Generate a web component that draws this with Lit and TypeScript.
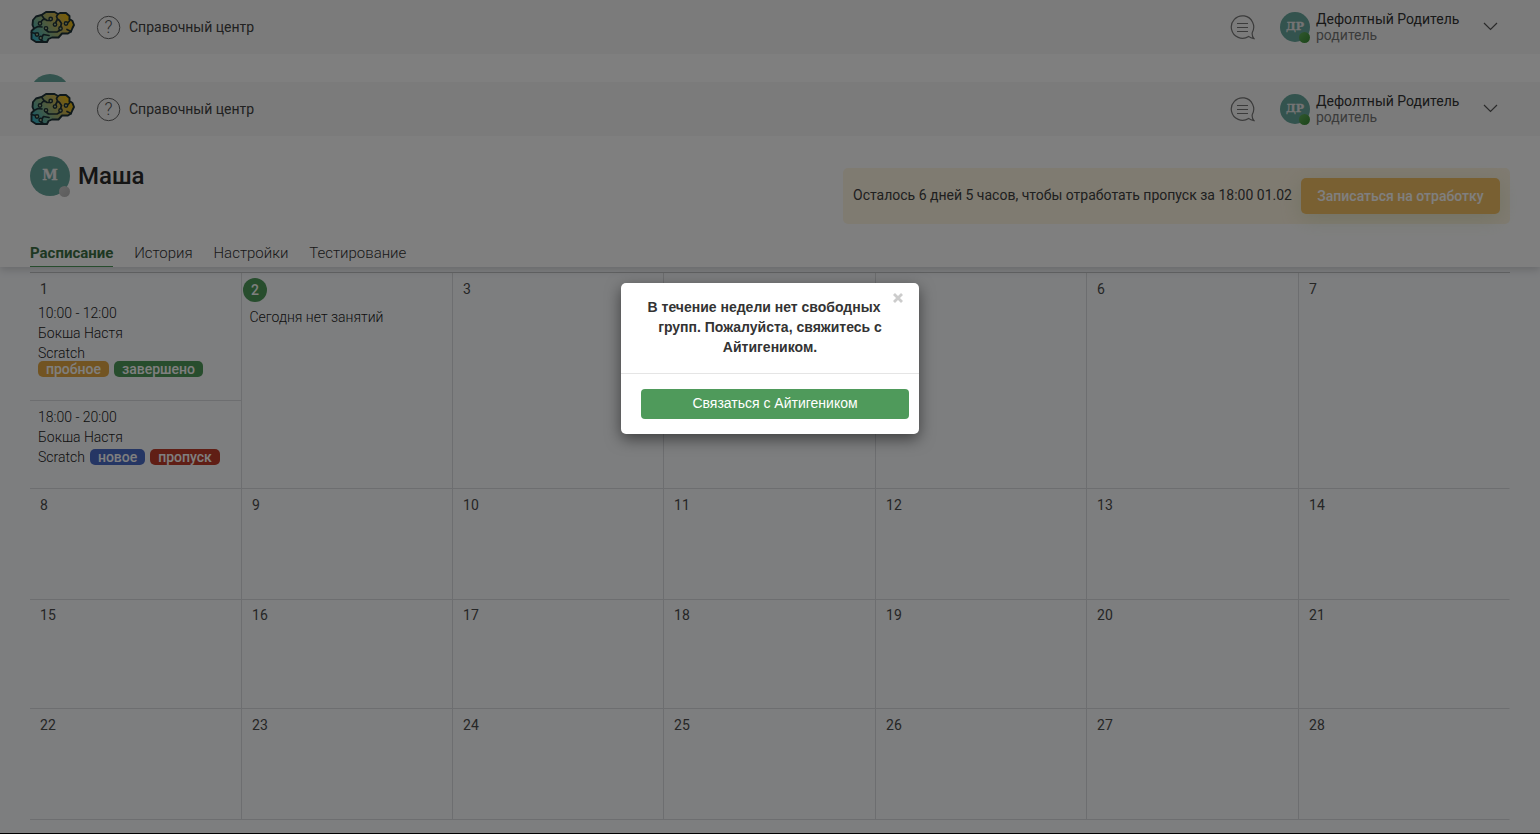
import { LitElement, html, css, svg } from "lit";
import { customElement, property } from "lit/decorators.js";

interface Lesson {
  time: string;
  teacher: string;
  course: string;
  stacked: boolean;
  tags: { text: string; kind: string }[];
}

const lessons: Lesson[] = [
  {
    time: "10:00 - 12:00", teacher: "Бокша Настя", course: "Scratch", stacked: true,
    tags: [{ text: "пробное", kind: "trial" }, { text: "завершено", kind: "done" }],
  },
  {
    time: "18:00 - 20:00", teacher: "Бокша Настя", course: "Scratch", stacked: false,
    tags: [{ text: "новое", kind: "fresh" }, { text: "пропуск", kind: "missed" }],
  },
];

const nodes = [[10, 13.5], [20.7, 9], [25, 14.6], [16, 18.3], [30.5, 18.5], [36, 13.5], [7, 24.5], [10.7, 28]];

@customElement("top-bar")
class TopBar extends LitElement {
  static styles = css`
    :host { display: flex; align-items: center; height: 54px; padding: 0 42px 0 30px; box-sizing: border-box; background: #f7f7f7; font-family: Roboto, sans-serif; flex: none; }
    .logo { width: 46px; height: 34px; display: block; }
    .help { display: flex; align-items: center; gap: 8px; margin-left: 20px; font-size: 14px; line-height: 20px; color: #424242; }
    .help svg, .chat, .chev { display: block; }
    .q { font: 300 18px Roboto, sans-serif; fill: #555; }
    .right { margin-left: auto; display: flex; align-items: center; }
    .avatar { position: relative; width: 30px; height: 30px; margin-left: 25px; border-radius: 50%; background: #66a69c; color: #e8e8e8; text-align: center; font: bold 11px/30px "DejaVu Serif", serif; -webkit-text-stroke: 0.3px #e8e8e8; }
    .dot { position: absolute; right: 0; bottom: -1px; width: 11px; height: 11px; border-radius: 50%; background: linear-gradient(135deg, #62b05c, #368a32); }
    .who { width: 167px; margin-left: 6px; font-size: 14px; line-height: 16px; color: #333; white-space: nowrap; }
    .role { color: #777; }
    .chev { margin-top: -1px; }
  `;
  render() {
    return html`
      <svg class="logo" viewBox="0 0 46 34">
        <defs>
          <linearGradient id="g" x1="0" y1="0.8" x2="1" y2="0.3">
            <stop offset="0" stop-color="#36b3c8" />
            <stop offset="0.45" stop-color="#9bb57c" />
            <stop offset="0.72" stop-color="#cfb44d" />
            <stop offset="1" stop-color="#f5bd00" />
          </linearGradient>
        </defs>
        <path fill="url(#g)" stroke="#1e3238" stroke-width="1.900" stroke-linejoin="round"
          d="M11.500 5 L16 2 H24.500 L28 4 L30 3 H36 L39.500 6 V9 L42.500 11 L44 15 L42.500 18 L41 21.500 L38 23.500 H32 L28.500 27.500 H22 L18.500 29 L17 32 H6 L1.500 29 V21 L4 18.500 L2.500 15 L3 10 L6 6.500 Z" />
        <g fill="none" stroke="#1e3238" stroke-width="1.700" stroke-linecap="round" stroke-linejoin="round">
          <path d="M10.800 12 L13 9.500 H16 M11.500 5 L14 8.500 L17 10.500 H19.500 M28 4 L26.500 6.500 L27.500 9 L25.500 13 M30.500 17 L31.500 13.500 L29.500 10.500 L27.500 9 M37.500 13 L39.500 11 V9 M4 18.500 L8 16.500 L12 17 M16 20 L18.500 22 H27 L30.500 20 M41 21.500 L37 19.500 M1.500 22.500 L5.500 23.500 M12 27 L13.500 24.500 L19 25.500 M10.700 29.500 L13 31.500" />
          ${nodes.map(([x, y]) => svg`<circle cx=${x} cy=${y} r="1.7" stroke-width="1.4" fill="#a8b98a"></circle>`)}
        </g>
      </svg>
      <div class="help">
        <svg width="25" height="25" viewBox="0 0 25 25">
          <circle cx="12.600" cy="12.500" r="11.200" fill="none" stroke="#666" />
          <text class="q" x="12.500" y="18" text-anchor="middle" textLength="8" lengthAdjust="spacingAndGlyphs">?</text>
        </svg>
        <span>Справочный центр</span>
      </div>
      <div class="right">
        <svg class="chat" width="25" height="26" viewBox="0 0 25 26" fill="none" stroke="#777" stroke-width="1.200">
          <path d="M22.200 18.600 A11.200 11.200 0 1 0 18.600 22.400 Q20.500 24.200 24 24.600 Q21.800 22.600 22.200 18.600" />
          <path d="M7 9.500 H18 M7 13.500 H18 M7 17.500 H18" />
        </svg>
        <div class="avatar">ДР<span class="dot"></span></div>
        <div class="who"><div>Дефолтный Родитель</div><div class="role">родитель</div></div>
        <svg class="chev" width="15" height="9" viewBox="0 0 15 9" fill="none" stroke="#555" stroke-width="1.200"><path d="M1 1 L7.500 7.500 L14 1" /></svg>
      </div>`;
  }
}

@customElement("day-cell")
class DayCell extends LitElement {
  @property({ type: Number }) day = 1;
  static styles = css`
    :host { display: block; box-sizing: border-box; border-bottom: 1px solid #dbdde0; border-right: 1px solid #dbdde0; min-width: 0; font: 300 14px/20px Roboto, sans-serif; color: #222; }
    :host(.last) { border-right-color: transparent; }
    .num { height: 20px; padding: 6px 0 0 10px; font-weight: 400; color: #4c4c4c; letter-spacing: 0.2px; }
    .num.tight { padding-top: 5px; }
    .today { width: 24px; height: 24px; margin: 5px 0 0 1px; border-radius: 50%; background: #4f9a5b; color: #fff; text-align: center; line-height: 24px; font-weight: 500; }
    .none { padding: 5px 0 0 7.500px; }
    .lesson { padding: 6px 0 0 8px; height: 81px; box-sizing: border-box; }
    .lesson.first { padding-top: 4px; height: 102px; border-bottom: 1px solid #dbdde0; }
    .row { display: flex; align-items: center; gap: 5px; }
    .row.stacked { display: block; }
    .tags { display: flex; gap: 5px; }
    .stacked .tags { margin-top: -2px; }
    .tag { height: 16px; line-height: 16px; padding: 0 8px; border-radius: 5px; color: #fff; font-size: 14px; font-weight: 500; }
    .trial { background: #e5a944; } .done { background: #4f9a5b; } .fresh { background: #4b6cc8; } .missed { background: #c03c2b; }
  `;
  render() {
    if (this.day === 2) return html`<div class="today">2</div><div class="none">Сегодня нет занятий</div>`;
    return html`<div class="num ${this.day > 14 && this.day < 22 ? "tight" : ""}">${this.day}</div>
      ${this.day === 1 ? lessons.map((l) => html`
        <div class="lesson ${l.stacked ? "first" : ""}">
          <div>${l.time}</div><div>${l.teacher}</div>
          <div class="row ${l.stacked ? "stacked" : ""}"><div>${l.course}</div>
            <div class="tags">${l.tags.map((t) => html`<span class="tag ${t.kind}">${t.text}</span>`)}</div>
          </div>
        </div>`) : ""}`;
  }
}

@customElement("app-root")
class AppRoot extends LitElement {
  static styles = css`
    :host { display: block; position: relative; width: 1540px; height: 834px; overflow: hidden; background: #000; font-family: Roboto, sans-serif; }
    .page { height: 833px; display: flex; flex-direction: column; background: #fafcff; overflow: hidden; }
    .peek { flex: none; height: 28px; background: #fff; overflow: hidden; padding-left: 30px; }
    .circle { width: 40px; height: 40px; border-radius: 50%; background: #66a69c; }
    .peek .circle { margin-top: 20px; }
    .top { flex: none; position: relative; height: 131px; box-sizing: border-box; background: #fff; box-shadow: 0 3px 8px rgba(0,0,0,.16); clip-path: inset(0 0 -16px 0); display: flex; flex-direction: column; justify-content: space-between; padding: 20px 30px 0; }
    .line { display: flex; justify-content: space-between; align-items: flex-start; }
    .student { display: flex; align-items: center; gap: 8px; font-size: 24px; font-weight: 500; color: #2a2a2a; }
    .student .circle { position: relative; color: #eee; text-align: center; font: bold 14px/39px "DejaVu Serif", serif; -webkit-text-stroke: 0.3px #eee; }
    .dot { position: absolute; right: 0; bottom: -1px; width: 11px; height: 11px; border-radius: 50%; background: linear-gradient(135deg, #cecece, #b8b8b8); }
    .notice { display: flex; align-items: center; box-sizing: border-box; width: 667px; height: 56px; margin-top: 12px; padding: 0 10px; border-radius: 5px; background: #fff6e3; font-size: 14px; color: #404040; white-space: nowrap; justify-content: space-between; }
    .notice span { margin-top: -3px; }
    .book { width: 199px; height: 36px; border: 0; border-radius: 5px; padding: 0; background: #f3c165; color: #fff; font: 500 14px Roboto, sans-serif; box-shadow: 0 5px 20px rgba(160,190,120,.28); }
    .tabs { display: flex; gap: 20.800px; font-size: 15px; font-weight: 300; line-height: 20px; color: #333; }
    .tab { height: 23px; border-bottom: 1px solid transparent; }
    .tab.on { font-weight: 700; color: #3c7045; border-color: #4f9a5b; }
    .cal { flex: none; margin: 5px 30px 0; display: grid; grid-template-columns: 212px 211px 211px 212px 211px 212px 211px; grid-template-rows: 216px 111px 109px 111px; border-top: 1px solid #c6c8ca; }
    .veil { position: absolute; inset: 0; background: rgba(0,0,0,.5); }
    .modal { position: absolute; left: 621px; top: 283px; width: 298px; height: 151px; border-radius: 5px; background: #fff; box-shadow: 0 5px 15px rgba(0,0,0,.5); font: 14px/20px "Liberation Sans", Arial, sans-serif; color: #333; }
    .msg { box-sizing: border-box; height: 91px; padding: 14px 15px; border-bottom: 1px solid #e5e5e5; text-align: center; font-weight: 700; }
    .x { float: right; width: 12px; height: 15px; margin-top: -10px; }
    .x svg { display: block; margin-top: 6px; }
    .contact { display: block; width: 268px; height: 30px; margin: 15px 0 0 20px; padding: 0 0 2px; border: 0; border-radius: 4px; background: #4f9a5b; color: #fff; font: 14px/28px "Liberation Sans", Arial, sans-serif; }
  `;
  render() {
    const days = Array.from({ length: 28 }, (_, i) => i + 1);
    return html`
      <div class="page">
        <top-bar></top-bar>
        <div class="peek"><div class="circle"></div></div>
        <top-bar></top-bar>
        <div class="top">
          <div class="line">
            <div class="student"><div class="circle">М<span class="dot"></span></div><span>Маша</span></div>
            <div class="notice"><span>Осталось 6 дней 5 часов, чтобы отработать пропуск за 18:00 01.02</span><button class="book">Записаться на отработку</button></div>
          </div>
          <div class="tabs"><div class="tab on">Расписание</div><div class="tab">История</div><div class="tab">Настройки</div><div class="tab">Тестирование</div></div>
        </div>
        <div class="cal">${days.map((d) => html`<day-cell class=${d % 7 ? "" : "last"} .day=${d}></day-cell>`)}</div>
      </div>
      <div class="veil"></div>
      <div class="modal">
        <div class="msg"><div class="x"><svg width="12" height="10" viewBox="0 0 12 10"><path d="M2 1 L10 9 M10 1 L2 9" stroke="#ccc" stroke-width="2.800" /></svg></div>В течение недели нет свободных групп. Пожалуйста, свяжитесь с Айтигеником.</div>
        <button class="contact">Связаться с Айтигеником</button>
      </div>`;
  }
}
